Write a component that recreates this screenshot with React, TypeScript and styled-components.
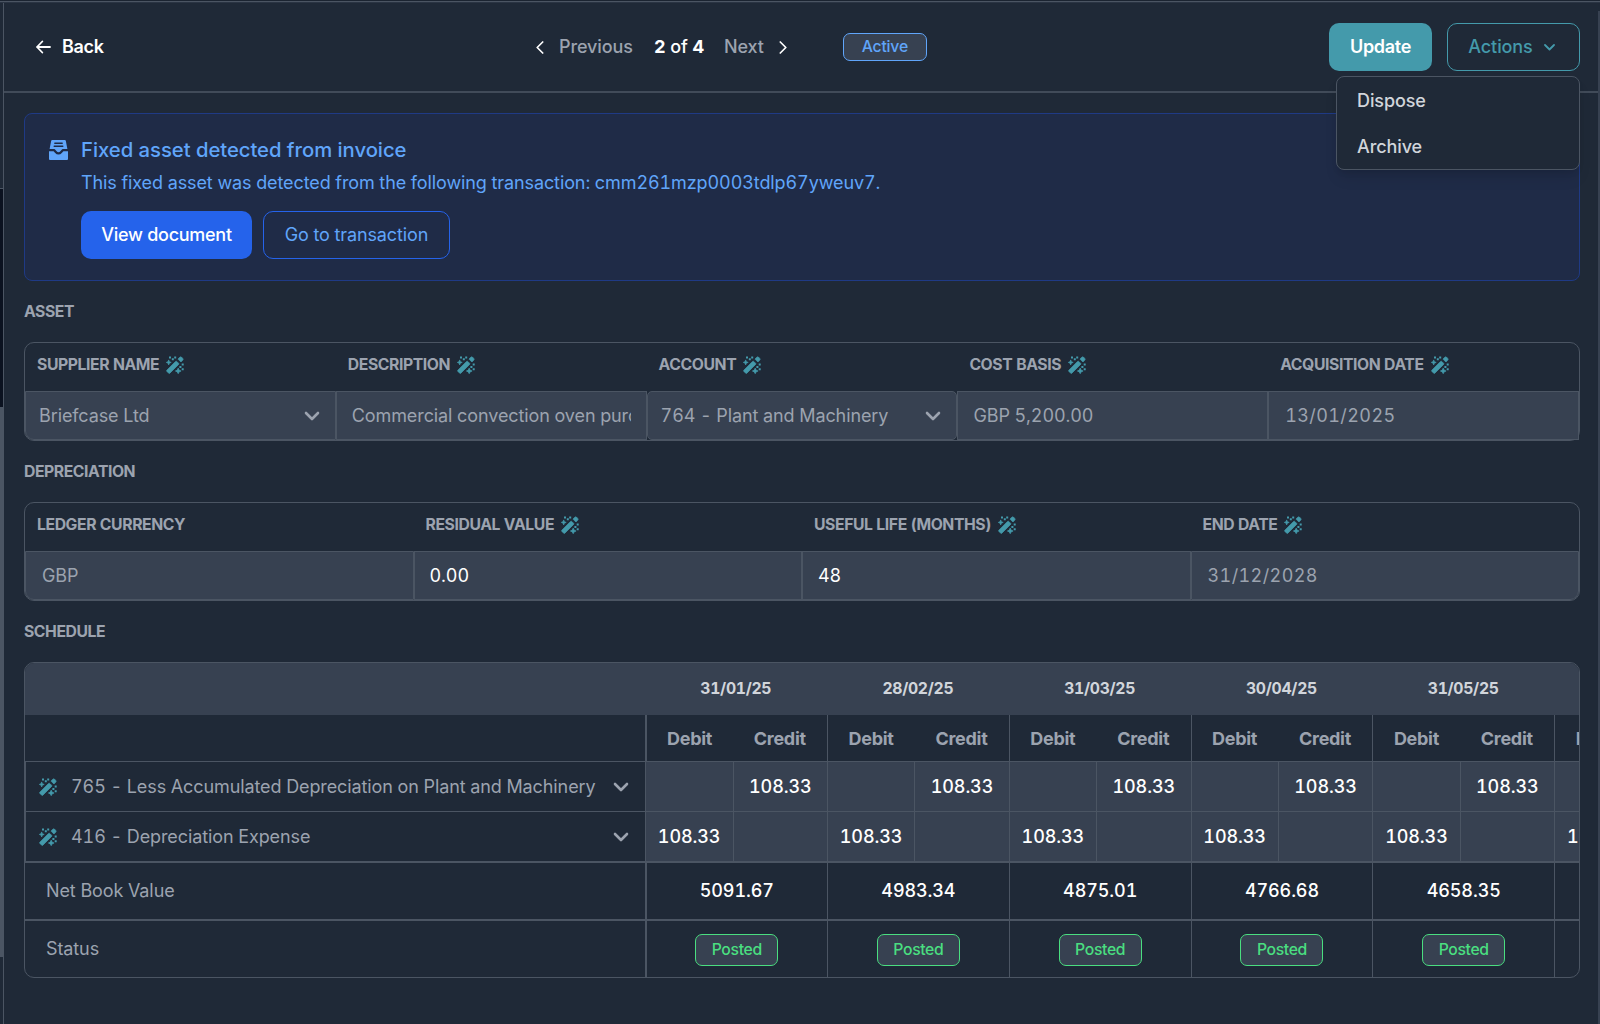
import React from 'react';
import styled, { createGlobalStyle, css } from 'styled-components';

const c = {
  bg: '#1f2937',
  field: '#374151',
  line: '#4b5563',
  muted: '#9ca3af',
  light: '#d1d5db',
  teal: '#449aab',
  blue: '#60a5fa',
  green: '#4ade80',
};

const Global = createGlobalStyle`
  *, *::before, *::after { box-sizing: border-box; }
  body {
    margin: 0;
    background: ${c.bg};
    color: #fff;
    font-family: Inter, "Liberation Sans", sans-serif;
    font-size: 18px;
    line-height: 24px;
    letter-spacing: -0.1px;
    font-variant-numeric: tabular-nums;
    overflow: hidden;
  }
  button { font: inherit; font-variant-numeric: inherit; letter-spacing: inherit; }
`;

/* ---------- shell ---------- */

const Screen = styled.div`
  display: flex;
  flex-direction: column;
  width: 1600px;
  height: 1024px;
  background: ${c.bg};
`;

const TopEdge = styled.div`
  flex: none;
  height: 3px;
  border-top: 1px solid #1b2431;
  border-bottom: 1px solid #2a3443;
  background: ${c.line};
`;

const Body = styled.div`
  display: flex;
  flex: 1;
  min-height: 0;
`;

const Rail = styled.div`
  display: flex;
  flex-direction: column;
  width: 4px;
  border-right: 1px solid ${c.line};
`;

const RailPart = styled.div<{ $h?: number; $bg: string; $line?: boolean }>`
  ${p => (p.$h ? `height: ${p.$h}px;` : 'flex: 1;')}
  background: ${p => p.$bg};
  ${p => p.$line && `border-top: 1px solid ${c.line};`}
`;

const Panel = styled.main`
  display: flex;
  flex-direction: column;
  flex: 1;
  min-width: 0;
`;

const RightEdge = styled.div`
  width: 2px;
  margin-top: 8px;
  background: #374151;
`;

/* ---------- header ---------- */

const Header = styled.header`
  display: grid;
  grid-template-columns: 500px auto 1fr;
  align-items: center;
  height: 90px;
  padding: 0 18px 0 32px;
  border-bottom: 2px solid #414b59;
`;

const Back = styled.a`
  display: flex;
  align-items: center;
  gap: 11px;
  font-weight: 600;
  letter-spacing: -0.3px;
`;

const Center = styled.div`
  display: flex;
  align-items: center;
`;

const PagerLink = styled.span`
  display: flex;
  align-items: center;
  gap: 15px;
  color: ${c.muted};
  font-weight: 500;
  svg { color: #fff; }
`;

const Count = styled.span`
  margin: 0 20px 0 21px;
  font-weight: 500;
  b { font-weight: 700; }
`;

const ActiveBadge = styled.span`
  display: flex;
  align-items: center;
  justify-content: center;
  width: 84px;
  height: 28px;
  margin-left: 56px;
  border: 1px solid ${c.blue};
  border-radius: 7px;
  background: ${c.field};
  color: ${c.blue};
  font-size: 15.75px;
  font-weight: 500;
  letter-spacing: -0.2px;
`;

const HeaderActions = styled.div`
  display: flex;
  justify-content: flex-end;
  gap: 15px;
`;

const Button = styled.button<{ $kind: 'teal' | 'tealOutline' | 'blue' | 'blueOutline'; $w: number }>`
  display: flex;
  align-items: center;
  justify-content: center;
  gap: 11px;
  width: ${p => p.$w}px;
  height: 48px;
  padding: 0;
  border-radius: 10px;
  font-weight: 500;
  ${p => p.$kind === 'teal' && css`background: ${c.teal}; color: #fff; border: 0; font-weight: 600; letter-spacing: -0.3px;`}
  ${p => p.$kind === 'tealOutline' && css`padding-right: 4px; background: none; color: ${c.teal}; border: 1px solid ${c.teal};`}
  ${p => p.$kind === 'blue' && css`background: #2563eb; color: #fff; border: 0; letter-spacing: -0.27px;`}
  ${p => p.$kind === 'blueOutline' && css`background: none; color: ${c.blue}; border: 1px solid #2563eb; font-weight: 400;`}
`;

const MenuAnchor = styled.div`
  position: relative;
`;

const Menu = styled.div`
  position: absolute;
  top: 53px;
  right: 0;
  z-index: 2;
  width: 244px;
  height: 94px;
  border: 1px solid ${c.line};
  border-radius: 8px;
  background: ${c.bg};
  box-shadow: 0 10px 15px -3px rgba(0, 0, 0, 0.1), 0 4px 6px -2px rgba(0, 0, 0, 0.1);
`;

const MenuItem = styled.div`
  height: 46px;
  padding: 12px 20px 10px;
  color: ${c.light};
  font-weight: 500;
`;

/* ---------- content ---------- */

const Content = styled.div`
  display: flex;
  flex-direction: column;
  padding: 20px 18px 0 20px;
`;

const Banner = styled.section`
  display: flex;
  gap: 13px;
  height: 168px;
  padding: 24px 24px 0;
  border: 1px solid #1f3a85;
  border-radius: 8px;
  background: #1f2b47;
  color: ${c.blue};
  > svg { margin-top: 2px; flex: none; }
`;

const BannerTitle = styled.h2`
  margin: 0;
  font-size: 20.25px;
  font-weight: 500;
  line-height: 24px;
  letter-spacing: -0.03px;
`;

const BannerText = styled.p`
  margin: 8px 0 16px;
  line-height: 25px;
`;

const ButtonRow = styled.div`
  display: flex;
  gap: 11px;
`;

const SectionTitle = styled.h3`
  margin: 21px 0 20px;
  color: ${c.muted};
  font-size: 15.75px;
  font-weight: 700;
  line-height: 20px;
  letter-spacing: -0.45px;
`;

const FieldTable = styled.section<{ $cols: number }>`
  display: grid;
  grid-template-columns: repeat(${p => p.$cols}, 1fr);
  grid-template-rows: 48px 49px;
  height: 99px;
  border: 1px solid ${c.line};
  border-radius: 10px;
`;

const Label = styled.div`
  display: flex;
  align-items: center;
  gap: 7px;
  padding: 0 0 5px 12px;
  color: ${c.muted};
  font-size: 15.75px;
  font-weight: 700;
  letter-spacing: -0.42px;
`;

const Field = styled.div<{ $pad: number; $radius?: string; $strong?: boolean; $date?: boolean }>`
  display: flex;
  align-items: center;
  justify-content: space-between;
  min-width: 0;
  padding: 0 ${p => (p.$date ? 16 : 15)}px 0 ${p => p.$pad}px;
  border: 1px solid ${c.line};
  border-radius: ${p => p.$radius ?? '0'};
  background: ${c.field};
  color: ${p => (p.$strong ? '#fff' : c.muted)};
  ${p => p.$date && 'letter-spacing: 0.4px;'}
`;

const Clip = styled.span`
  flex: 1;
  overflow: hidden;
  white-space: nowrap;
`;

/* ---------- schedule ---------- */

const Schedule = styled.section`
  display: flex;
  height: 316px;
  border: 1px solid ${c.line};
  border-radius: 10px;
  overflow: hidden;
`;

const ROWS = '52px 47px 50px 51px 58px 56px';

const Accounts = styled.div`
  display: grid;
  grid-template-rows: ${ROWS};
  flex: none;
  width: 619.6px;
`;

const AccountCell = styled.div<{ $kind: 'head' | 'sub' | 'select' | 'selectLast' | 'value' | 'status' }>`
  display: flex;
  align-items: center;
  padding-left: 21px;
  color: ${c.muted};
  ${p => p.$kind === 'head' && css`background: ${c.field};`}
  ${p => p.$kind === 'sub' && css`border-bottom: 1px solid ${c.line};`}
  ${p => (p.$kind === 'select' || p.$kind === 'selectLast') && css`
    padding: 0 16px 0 13px;
    border-left: 1px solid ${c.line};
    border-bottom: ${p.$kind === 'select' ? 1 : 2}px solid ${c.line};
    > span { flex: 1; padding-left: 14px; white-space: nowrap; }
  `}
  ${p => p.$kind === 'value' && css`border-bottom: 2px solid ${c.line};`}
`;

const Period = styled.div<{ $first?: boolean }>`
  display: grid;
  grid-template-rows: ${ROWS};
  grid-template-columns: ${p => (p.$first ? '88px 94.4px' : '87.2px 94.6px')};
  flex: none;
`;

const edge = css<{ $first?: boolean }>`
  border-left: ${p => (p.$first ? 2 : 1)}px solid ${c.line};
`;

const DateCell = styled.div`
  grid-column: 1 / -1;
  display: flex;
  align-items: center;
  justify-content: center;
  background: ${c.field};
  color: ${c.light};
  font-size: 15.75px;
  font-weight: 700;
  letter-spacing: -0.3px;
`;

const SubHead = styled.div<{ $first?: boolean; $edge?: boolean }>`
  display: flex;
  align-items: center;
  justify-content: center;
  padding-top: 1px;
  border-bottom: 1px solid ${c.line};
  color: ${c.muted};
  font-weight: 700;
  letter-spacing: -0.3px;
  ${p => p.$edge && edge}
`;

const Amount = styled.div<{ $last?: boolean }>`
  display: flex;
  align-items: center;
  justify-content: center;
  border-left: 1px solid ${c.line};
  border-bottom: ${p => (p.$last ? 2 : 1)}px solid ${c.line};
  background: ${c.field};
  font-weight: 500;
`;

const Wide = styled.div<{ $first?: boolean; $line?: boolean }>`
  grid-column: 1 / -1;
  display: flex;
  align-items: center;
  justify-content: center;
  font-weight: 500;
  ${edge}
  ${p => (p.$line ? css`border-bottom: 2px solid ${c.line};` : css`padding-top: 2px;`)}
`;

const Posted = styled.span`
  display: flex;
  align-items: center;
  justify-content: center;
  width: 83px;
  height: 32px;
  border: 1px solid ${c.green};
  border-radius: 7px;
  background: ${c.field};
  color: ${c.green};
  font-size: 15.75px;
  font-weight: 500;
  letter-spacing: -0.35px;
`;

/* ---------- icons ---------- */

const Wand = () => (
  <svg width="18" height="18" viewBox="0 0 18 18" fill={c.teal}>
    <g stroke={c.teal} strokeWidth=".7" strokeLinejoin="round">
      <path d="M.8 14.2 9.6 5.4a.8.8 0 0 1 1.1 0l1.9 1.9a.8.8 0 0 1 0 1.1L3.8 17.2a.8.8 0 0 1-1.1 0L.8 15.3a.8.8 0 0 1 0-1.1z" />
      <path d="M12 3.1 13.9 1.2a1.2 1.2 0 0 1 1.6 0l1.3 1.3a1.2 1.2 0 0 1 0 1.6L14.9 6z" />
      <path d="M2.7 3.9 3.4 5.7 5.2 6.4 3.4 7.1 2.7 8.9 2 7.1.3 6.4 2 5.7z" />
      <path d="M12.2 12.1 13.1 14.1 15.1 15 13.1 15.9 12.2 17.7 11.3 15.9 9.4 15 11.3 14.1z" />
    </g>
    <path d="M3 .4h2v2H3zM5.8 2.3h2v2h-2zM8.2.4h2v2h-2zM15.7 7.5h2v2h-2zM13.4 9.9h2v2h-2zM15.7 12.2h2v2h-2z" />
  </svg>
);

const Tray = () => (
  <svg width="19" height="20" viewBox="0 0 19 20">
    <path d="M3.2 0h12.6a1 1 0 0 1 1 .8L18.4 9h-4.7a1 1 0 0 0-.8.4L11.6 11a2.8 2.8 0 0 1-4.2 0L6.1 9.4a1 1 0 0 0-.8-.4H.6L2.2.8a1 1 0 0 1 1-.8z" fill={c.blue} />
    <path d="M5.8 3.2h7.4M5.2 6.3h8.6" stroke="#1f2b47" strokeWidth="1.4" strokeLinecap="round" />
    <path d="M0 11.2h4.6l1.6 1.7a4.3 4.3 0 0 0 6.6 0l1.6-1.7H19V19a1 1 0 0 1-1 1H1a1 1 0 0 1-1-1z" fill={c.blue} />
  </svg>
);

const ArrowLeft = () => (
  <svg width="15" height="14" viewBox="0 0 15 14" fill="none" stroke="#fff" strokeWidth="1.8" strokeLinecap="round" strokeLinejoin="round">
    <path d="M6.3 1.5 1 7l5.3 5.5M1 7h13" />
  </svg>
);

const Side = ({ d }: { d: string }) => (
  <svg width="8" height="13" viewBox="0 0 8 13" fill="none" stroke="currentColor" strokeWidth="1.7" strokeLinecap="round" strokeLinejoin="round">
    <path d={d} />
  </svg>
);

const SmallDown = () => (
  <svg width="11" height="7" viewBox="0 0 11 7" fill="none" stroke="currentColor" strokeWidth="1.8" strokeLinecap="round" strokeLinejoin="round">
    <path d="m1 1 4.5 4.5L10 1" />
  </svg>
);

const Down = () => (
  <svg width="16" height="10" viewBox="0 0 16 10" fill="none" stroke={c.muted} strokeWidth="2.6" strokeLinecap="round" strokeLinejoin="round">
    <path d="m2 2 6 6 6-6" />
  </svg>
);

/* ---------- data ---------- */

const periods = [
  ['31/01/25', '5091.67'],
  ['28/02/25', '4983.34'],
  ['31/03/25', '4875.01'],
  ['30/04/25', '4766.68'],
  ['31/05/25', '4658.35'],
  ['', ''],
];

export default function App() {
  return (
    <Screen>
      <Global />
      <TopEdge />
      <Body>
        <Rail>
          <RailPart $h={185} $bg={c.bg} />
          <RailPart $h={219} $bg="#0b1220" $line />
          <RailPart $h={549} $bg={c.line} />
          <RailPart $bg={c.bg} $line />
        </Rail>
        <Panel>
          <Header>
            <Back><ArrowLeft />Back</Back>
            <Center>
              <PagerLink><Side d="M6.7 1 1.2 6.5 6.7 12" />Previous</PagerLink>
              <Count><b>2</b> of <b>4</b></Count>
              <PagerLink>Next<Side d="M1.3 1l5.5 5.5L1.3 12" /></PagerLink>
              <ActiveBadge>Active</ActiveBadge>
            </Center>
            <HeaderActions>
              <Button $kind="teal" $w={103}>Update</Button>
              <MenuAnchor>
                <Button $kind="tealOutline" $w={133}>Actions<SmallDown /></Button>
                <Menu>
                  <MenuItem>Dispose</MenuItem>
                  <MenuItem>Archive</MenuItem>
                </Menu>
              </MenuAnchor>
            </HeaderActions>
          </Header>
          <Content>
            <Banner>
              <Tray />
              <div>
                <BannerTitle>Fixed asset detected from invoice</BannerTitle>
                <BannerText>This fixed asset was detected from the following transaction: cmm261mzp0003tdlp67yweuv7.</BannerText>
                <ButtonRow>
                  <Button $kind="blue" $w={171}>View document</Button>
                  <Button $kind="blueOutline" $w={187}>Go to transaction</Button>
                </ButtonRow>
              </div>
            </Banner>

            <SectionTitle>ASSET</SectionTitle>
            <FieldTable $cols={5}>
              <Label>SUPPLIER NAME<Wand /></Label>
              <Label>DESCRIPTION<Wand /></Label>
              <Label>ACCOUNT<Wand /></Label>
              <Label>COST BASIS<Wand /></Label>
              <Label>ACQUISITION DATE<Wand /></Label>
              <Field $pad={13} $radius="0 0 0 9px">Briefcase Ltd<Down /></Field>
              <Field $pad={15}><Clip>Commercial convection oven purchase</Clip></Field>
              <Field $pad={13} $radius="5px">764 - Plant and Machinery<Down /></Field>
              <Field $pad={15}>GBP 5,200.00</Field>
              <Field $pad={16} $date>13/01/2025</Field>
            </FieldTable>

            <SectionTitle>DEPRECIATION</SectionTitle>
            <FieldTable $cols={4}>
              <Label>LEDGER CURRENCY</Label>
              <Label>RESIDUAL VALUE<Wand /></Label>
              <Label>USEFUL LIFE (MONTHS)<Wand /></Label>
              <Label>END DATE<Wand /></Label>
              <Field $pad={16} $radius="0 0 0 9px">GBP</Field>
              <Field $pad={15} $strong>0.00</Field>
              <Field $pad={15} $strong>48</Field>
              <Field $pad={16} $date $radius="0 0 9px 0">31/12/2028</Field>
            </FieldTable>

            <SectionTitle>SCHEDULE</SectionTitle>
            <Schedule>
              <Accounts>
                <AccountCell $kind="head" />
                <AccountCell $kind="sub" />
                <AccountCell $kind="select"><Wand /><span>765 - Less Accumulated Depreciation on Plant and Machinery</span><Down /></AccountCell>
                <AccountCell $kind="selectLast"><Wand /><span>416 - Depreciation Expense</span><Down /></AccountCell>
                <AccountCell $kind="value">Net Book Value</AccountCell>
                <AccountCell $kind="status">Status</AccountCell>
              </Accounts>
              {periods.map(([date, nbv], i) => (
                <Period key={i} $first={i === 0}>
                  <DateCell>{date}</DateCell>
                  <SubHead $edge $first={i === 0}>Debit</SubHead>
                  <SubHead>Credit</SubHead>
                  <Amount />
                  <Amount>108.33</Amount>
                  <Amount $last>108.33</Amount>
                  <Amount $last />
                  <Wide $first={i === 0} $line>{nbv}</Wide>
                  <Wide $first={i === 0}>{date && <Posted>Posted</Posted>}</Wide>
                </Period>
              ))}
            </Schedule>
          </Content>
        </Panel>
        <RightEdge />
      </Body>
    </Screen>
  );
}
